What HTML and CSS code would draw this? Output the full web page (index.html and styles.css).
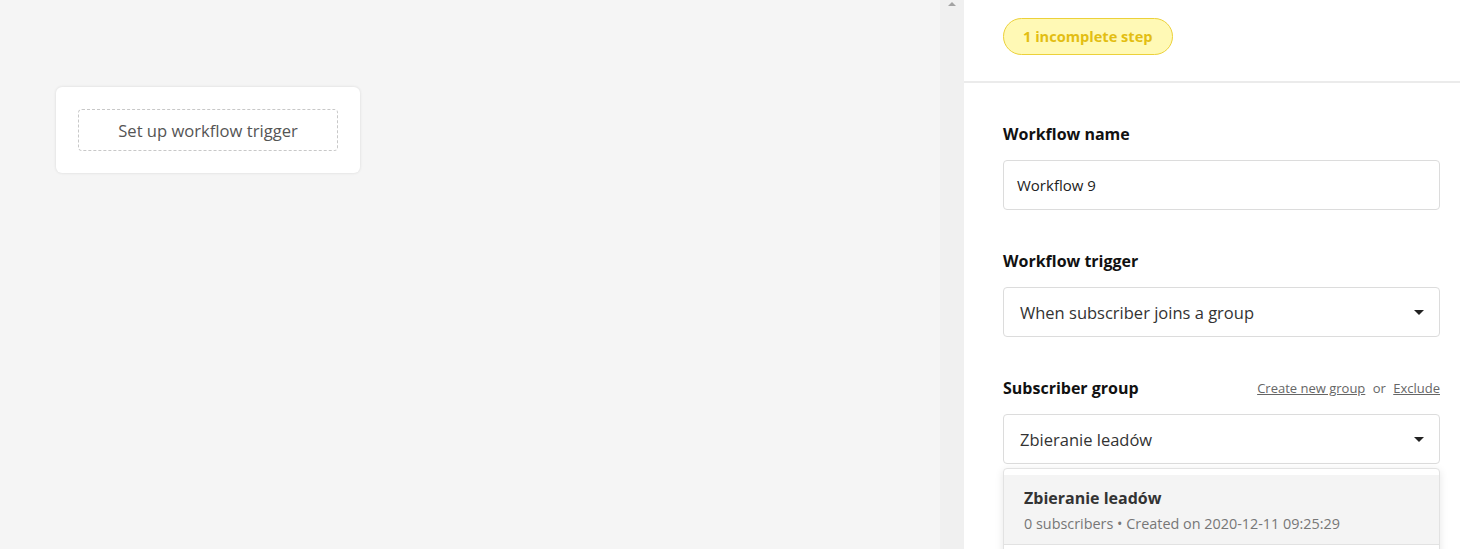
FILE: index.html
```html
<!DOCTYPE html>
<html lang="en">
<head>
    <meta charset="UTF-8">
    <meta name="viewport" content="width=device-width, initial-scale=1.0">
    <title>Workflow editor</title>
    <link rel="stylesheet" href="styles.css">
</head>
<body>
    <div class="editor">
        <div class="canvas">
            <div class="trigger-card">
                <div class="trigger-slot">Set up workflow trigger</div>
            </div>
        </div>
        <div class="scrollbar">
            <span class="scroll-up"></span>
        </div>
        <div class="panel">
            <div class="panel-header">
                <span class="badge">1 incomplete step</span>
            </div>
            <div class="panel-body">
                <div class="field">
                    <div class="field-head">
                        <label class="field-label">Workflow name</label>
                    </div>
                    <div class="input">Workflow 9</div>
                </div>
                <div class="field">
                    <div class="field-head">
                        <label class="field-label">Workflow trigger</label>
                    </div>
                    <div class="select">
                        <span>When subscriber joins a group</span>
                        <span class="caret"></span>
                    </div>
                </div>
                <div class="field">
                    <div class="field-head">
                        <label class="field-label">Subscriber group</label>
                        <div class="field-links">
                            <a href="#">Create new group</a>
                            <span>or</span>
                            <a href="#">Exclude</a>
                        </div>
                    </div>
                    <div class="select">
                        <span>Zbieranie leadów</span>
                        <span class="caret"></span>
                    </div>
                    <div class="dropdown">
                        <div class="option active">
                            <div class="option-title">Zbieranie leadów</div>
                            <div class="option-meta">0 subscribers &bull; Created on 2020-12-11 09:25:29</div>
                        </div>
                        <div class="option"></div>
                    </div>
                </div>
            </div>
        </div>
    </div>
</body>
</html>
```

FILE: styles.css
```css
body {
    margin: 0;
    font-family: "Open Sans", Lato, Arial, sans-serif;
    color: #222;
    overflow: hidden;
}
.editor {
    display: flex;
    height: 549px;
}
.canvas {
    flex: 1;
    background-color: #f5f5f5;
    padding: 87px 0 0 56px;
}
.trigger-card {
    width: 304px;
    box-sizing: border-box;
    padding: 22px;
    background-color: #fff;
    border-radius: 6px;
    box-shadow: 0 0 3px rgba(0, 0, 0, 0.12);
}
.trigger-slot {
    height: 42px;
    box-sizing: border-box;
    border: 1px dashed #c8c8c8;
    border-radius: 4px;
    display: flex;
    align-items: center;
    justify-content: center;
    font-size: 16.6px;
    color: #555;
}
.scrollbar {
    width: 24px;
    background-color: #f0f0f0;
    display: flex;
    justify-content: center;
    padding-top: 2px;
    box-sizing: border-box;
}
.scroll-up {
    width: 0;
    height: 0;
    border-left: 4px solid transparent;
    border-right: 4px solid transparent;
    border-bottom: 4px solid #a3a3a3;
}
.panel {
    width: 496px;
    background-color: #fff;
}
.panel-header {
    height: 83px;
    box-sizing: border-box;
    padding: 18px 0 0 39px;
    border-bottom: 2px solid #ebebeb;
}
.badge {
    display: inline-block;
    height: 37px;
    line-height: 35px;
    box-sizing: border-box;
    padding: 0 19px;
    border: 1px solid #ecd13a;
    border-radius: 19px;
    background-color: #fff9b5;
    color: #e3be12;
    font-weight: 700;
    font-size: 14.6px;
}
.panel-body {
    padding: 40px 20px 0 39px;
}
.field {
    margin-bottom: 40px;
}
.field-head {
    display: flex;
    justify-content: space-between;
    align-items: center;
    height: 22px;
    margin-bottom: 15px;
}
.field-label {
    font-size: 16px;
    font-weight: 700;
    color: #111;
}
.field-links {
    font-size: 13px;
    color: #666;
}
.field-links a {
    color: #666;
    text-decoration: underline;
}
.field-links span {
    margin: 0 4px;
}
.input, .select {
    height: 50px;
    box-sizing: border-box;
    border: 1px solid #dcdcdc;
    border-radius: 4px;
    display: flex;
    align-items: center;
}
.input {
    padding: 0 13px;
    font-size: 15px;
    color: #222;
}
.select {
    padding: 0 16px;
    justify-content: space-between;
    font-size: 16.5px;
    color: #333;
}
.caret {
    width: 0;
    height: 0;
    margin-right: -1px;
    border-left: 5px solid transparent;
    border-right: 5px solid transparent;
    border-top: 5px solid #222;
}
.dropdown {
    margin-top: 4px;
    border: 1px solid #e2e2e2;
    border-radius: 4px 4px 0 0;
    padding-top: 6px;
    background-color: #fff;
    box-shadow: 0 2px 8px rgba(0, 0, 0, 0.1);
}
.option {
    padding: 12px 20px 11px;
    border-bottom: 1px solid #e2e2e2;
}
.option.active {
    background-color: #f4f4f4;
}
.option-title {
    font-size: 16px;
    font-weight: 700;
    color: #333;
    margin-bottom: 5px;
}
.option-meta {
    font-size: 14.4px;
    color: #777;
}
```
